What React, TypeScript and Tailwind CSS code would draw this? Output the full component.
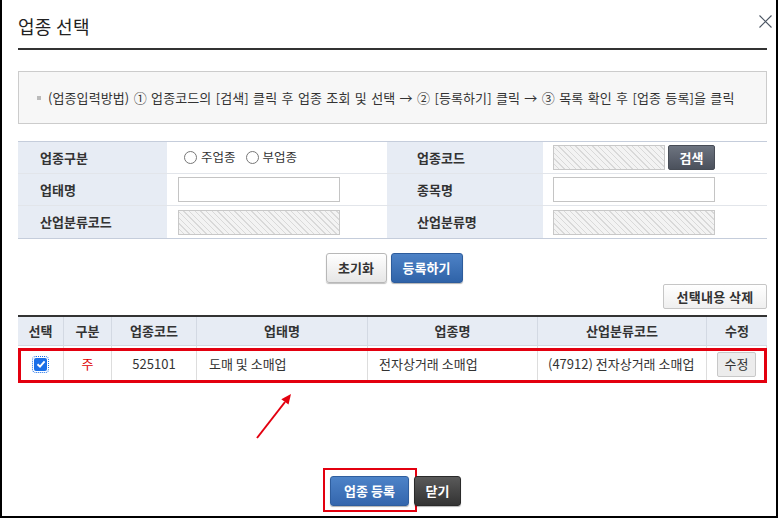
import React from "react";

const hatch =
  "bg-[repeating-linear-gradient(45deg,#f3f3f3_0px,#f3f3f3_3px,#d9d9d9_3px,#d9d9d9_4px)]";

function Radio({ label }: { label: string }) {
  return (
    <span className="flex items-center gap-[4px]">
      <span className="w-[13px] h-[13px] rounded-full border border-[#777] bg-white" />
      <span className="text-[12.5px] text-[#333]">{label}</span>
    </span>
  );
}

export default function App() {
  const thCls =
    "flex items-center justify-center border-r border-[#d3d9e3] last:border-r-0 font-bold text-[13px] text-[#333]";
  const tdCls = "flex items-center border-r border-[#dddddd] last:border-r-0 text-[13px] text-[#333]";
  return (
    <div className="relative w-[778px] h-[518px] bg-white border-l-2 border-r-2 border-b-2 border-black overflow-hidden font-['Noto_Sans_CJK_KR',sans-serif] text-[#333]">
      <div className="pl-[16px] pr-[9px] flex flex-col">
        {/* title */}
        <div className="h-[50px] border-b-2 border-[#333] pt-[13px]">
          <div className="text-[18px] leading-[26px] text-[#222] tracking-[0.3px]">업종 선택</div>
        </div>

        {/* info box */}
        <div className="mt-[21px] h-[53px] border border-[#cccccc] bg-[#f7f7f7] flex items-center pl-[18px]">
          <span className="w-[4px] h-[4px] bg-[#bbbbbb] mr-[7px]" />
          <span className="text-[13px] tracking-[0.1px] [word-spacing:1.3px] text-[#333]">
            (업종입력방법) ① 업종코드의 [검색] 클릭 후 업종 조회 및 선택 → ② [등록하기] 클릭 → ③ 목록 확인 후 [업종 등록]을 클릭
          </span>
        </div>

        {/* form */}
        <div className="mt-[17px] border-t border-[#c5cddb] border-b border-b-[#c5cddb] flex flex-col">
          <div className="grid grid-cols-[149px_220px_156px_224px] h-[32px] border-b border-[#e2e5ea]">
            <div className="bg-[#e7ecf4] flex items-center pl-[22px] font-bold text-[13px]">업종구분</div>
            <div className="flex items-center pl-[17px] gap-[10px]">
              <Radio label="주업종" />
              <Radio label="부업종" />
            </div>
            <div className="bg-[#e7ecf4] flex items-center pl-[30px] font-bold text-[13px]">업종코드</div>
            <div className="flex items-center pl-[10px] gap-[3px]">
              <div className={`w-[112px] h-[25px] border border-[#c8c8c8] ${hatch}`} />
              <button className="w-[47px] h-[25px] rounded-[2px] bg-gradient-to-b from-[#6d7480] to-[#4b515c] border border-[#474c55] text-white font-bold text-[13px] leading-none">
                검색
              </button>
            </div>
          </div>
          <div className="grid grid-cols-[149px_220px_156px_224px] h-[32px] border-b border-[#e2e5ea]">
            <div className="bg-[#e7ecf4] flex items-center pl-[22px] font-bold text-[13px]">업태명</div>
            <div className="flex items-center pl-[11px]">
              <div className="w-[162px] h-[25px] border border-[#c4c4c4] bg-white" />
            </div>
            <div className="bg-[#e7ecf4] flex items-center pl-[30px] font-bold text-[13px]">종목명</div>
            <div className="flex items-center pl-[10px]">
              <div className="w-[162px] h-[25px] border border-[#c4c4c4] bg-white" />
            </div>
          </div>
          <div className="grid grid-cols-[149px_220px_156px_224px] h-[32px]">
            <div className="bg-[#e7ecf4] flex items-center pl-[22px] font-bold text-[13px]">산업분류코드</div>
            <div className="flex items-center pl-[11px]">
              <div className={`w-[162px] h-[25px] border border-[#c8c8c8] ${hatch}`} />
            </div>
            <div className="bg-[#e7ecf4] flex items-center pl-[30px] font-bold text-[13px]">산업분류명</div>
            <div className="flex items-center pl-[10px]">
              <div className={`w-[162px] h-[25px] border border-[#c8c8c8] ${hatch}`} />
            </div>
          </div>
        </div>

        {/* action buttons */}
        <div className="mt-[14px] flex justify-center gap-[4px] pl-[3px]">
          <button className="w-[61px] h-[30px] rounded-[3px] border border-[#b8b8b8] bg-gradient-to-b from-[#ffffff] to-[#e6e6e6] shadow-[0_1px_1px_rgba(0,0,0,0.25)] font-bold text-[13px] text-[#333]">
            초기화
          </button>
          <button className="w-[72px] h-[30px] rounded-[3px] border border-[#2d5c9c] bg-gradient-to-b from-[#4d82c6] to-[#2f63a8] shadow-[0_1px_1px_rgba(0,0,0,0.3)] font-bold text-[13px] text-white">
            등록하기
          </button>
        </div>

        <div className="mt-[1px] flex justify-end">
          <button className="w-[104px] h-[25px] rounded-[2px] border border-[#c6c6c6] bg-gradient-to-b from-[#ffffff] to-[#efefef] font-bold text-[13px] text-[#333] tracking-[0.3px]">
            선택내용 삭제
          </button>
        </div>

        {/* list table */}
        <div className="mt-[6px] border-t-2 border-[#333] flex flex-col">
          <div className="grid grid-cols-[46px_48px_85px_171px_170px_169px_60px] h-[29px] bg-[#e7ecf4] border-b border-[#d3d9e3]">
            <div className={thCls}>선택</div>
            <div className={thCls}>구분</div>
            <div className={thCls}>업종코드</div>
            <div className={thCls}>업태명</div>
            <div className={thCls}>업종명</div>
            <div className={thCls}>산업분류코드</div>
            <div className={thCls}>수정</div>
          </div>
          <div className="relative grid grid-cols-[46px_48px_85px_171px_170px_169px_60px] h-[37px] border-b border-[#cccccc]">
            <div className={`${tdCls} justify-center`}>
              <span className="w-[13px] h-[13px] bg-[#1a6fe8] rounded-[2px] outline-dotted outline-1 outline-[#1a6fe8] outline-offset-[1px] flex items-center justify-center">
                <svg width="10" height="10" viewBox="0 0 10 10">
                  <path d="M1.5 5.2 L4 7.6 L8.6 2.4" fill="none" stroke="#fff" strokeWidth="1.9" />
                </svg>
              </span>
            </div>
            <div className={`${tdCls} justify-center text-[#e00000]`}>주</div>
            <div className={`${tdCls} justify-center`}>525101</div>
            <div className={`${tdCls} pl-[12px]`}>도매 및 소매업</div>
            <div className={`${tdCls} pl-[11px]`}>전자상거래 소매업</div>
            <div className={`${tdCls} pl-[10px]`}>(47912) 전자상거래 소매업</div>
            <div className={`${tdCls} justify-center`}>
              <button className="w-[39px] h-[25px] rounded-[2px] border border-[#c8c8c8] bg-[#ececec] text-[13px] text-[#333]">
                수정
              </button>
            </div>
            <div className="absolute left-0 right-0 top-[2px] bottom-[-1px] border-[3px] border-[#e3000f] pointer-events-none" />
          </div>
        </div>

        {/* bottom buttons */}
        <div className="mt-[85px] flex justify-center pr-[1px]">
          <div className="border-2 border-[#e3000f] pl-[5px] pr-[6px] pt-[6px] pb-[4px]">
            <button className="w-[79px] h-[30px] rounded-[3px] border border-[#2f5e9e] bg-gradient-to-b from-[#4d83c8] to-[#3466ad] shadow-[0_1px_1px_rgba(0,0,0,0.3)] font-bold text-[13px] text-white">
              업종 등록
            </button>
          </div>
          <div className="ml-[-3px] mt-[8px]">
            <button className="w-[47px] h-[30px] rounded-[3px] border border-[#2a2a2a] bg-gradient-to-b from-[#5a5a5a] to-[#333333] shadow-[0_1px_1px_rgba(0,0,0,0.3)] font-bold text-[13px] text-white">
              닫기
            </button>
          </div>
        </div>
      </div>

      {/* close X */}
      <svg className="absolute left-[757px] top-[15px]" width="13" height="13" viewBox="0 0 13 13">
        <path d="M0.5 0.5 L12.5 12.5 M12.5 0.5 L0.5 12.5" stroke="#4b5563" strokeWidth="1.1" />
      </svg>

      {/* arrow */}
      <svg className="absolute left-[248px] top-[388px]" width="50" height="56" viewBox="0 0 50 56">
        <line x1="7" y1="50" x2="35" y2="14" stroke="#e3000f" strokeWidth="2" />
        <polygon points="41,6 38.5,16.6 31.3,11.2" fill="#e3000f" />
      </svg>
    </div>
  );
}
